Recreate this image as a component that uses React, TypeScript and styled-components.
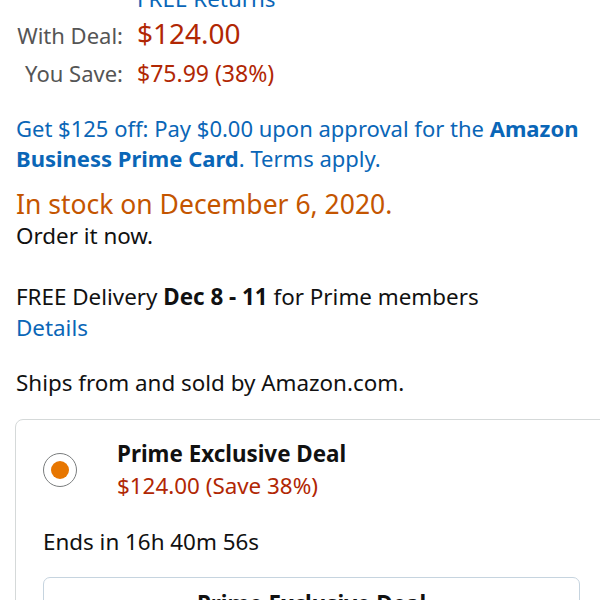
import React from "react";
import styled, { createGlobalStyle } from "styled-components";

const GlobalStyle = createGlobalStyle`
  html, body {
    margin: 0;
    padding: 0;
    background: #fff;
    overflow: hidden;
  }
  body {
    font-family: "Noto Sans", "Open Sans", Arial, sans-serif;
    color: #111;
  }
`;

type Price = { label: string; value: string; big?: boolean };

const prices: Array<Price> = [
  { label: "With Deal:", value: "$124.00", big: true },
  { label: "You Save:", value: "$75.99 (38%)" },
];

export default function App() {
  return (
    <Page>
      <GlobalStyle />
      <PriceGrid>
        <span />
        <Link>FREE Returns</Link>
        {prices.map((p) => (
          <React.Fragment key={p.label}>
            <PriceLabel>{p.label}</PriceLabel>
            <PriceValue big={p.big}>{p.value}</PriceValue>
          </React.Fragment>
        ))}
      </PriceGrid>

      <Promo>
        Get $125 off: Pay $0.00 upon approval for the <b>Amazon Business Prime Card</b>. Terms
        apply.
      </Promo>

      <Stock>In stock on December 6, 2020.</Stock>
      <Line>Order it now.</Line>

      <Delivery>
        <Line>
          FREE Delivery <b>Dec 8 - 11</b> for Prime members
        </Line>
        <Link>Details</Link>
      </Delivery>

      <Line>Ships from and sold by Amazon.com.</Line>

      <Card>
        <OptionRow>
          <Radio>
            <RadioDot />
          </Radio>
          <OptionText>
            <OptionTitle>Prime Exclusive Deal</OptionTitle>
            <OptionPrice>$124.00 (Save 38%)</OptionPrice>
          </OptionText>
        </OptionRow>
        <Line>Ends in 16h 40m 56s</Line>
        <DealButton>Prime Exclusive Deal</DealButton>
      </Card>
    </Page>
  );
}

const Page = styled.div`
  padding: 0 16px;
  font-size: 22.4px;
  line-height: 30px;
`;

const PriceGrid = styled.div`
  display: grid;
  grid-template-columns: 107px auto;
  column-gap: 14px;
  align-items: baseline;
  margin-top: -16px;
`;

const Link = styled.div`
  color: #0a66b7;
`;

const PriceLabel = styled.div`
  text-align: right;
  color: #555;
  font-size: 22px;
  line-height: 38px;
`;

const PriceValue = styled.div<{ big?: boolean }>`
  color: #b12704;
  font-size: ${(p) => (p.big ? 28 : 23)}px;
  line-height: 38px;
`;

const Promo = styled.div`
  color: #0a66b7;
  font-size: 22px;
  margin: 21px -16px 0 0;
  b {
    font-weight: 700;
  }
`;

const Stock = styled.div`
  color: #c45500;
  font-size: 26.5px;
  line-height: 34px;
  margin-top: 14px;
`;

const Line = styled.div`
  color: #111;
  b {
    font-weight: 700;
  }
`;

const Delivery = styled.div`
  display: flex;
  flex-direction: column;
  gap: 1px;
  margin: 31px 0 25px;
`;

const Card = styled.div`
  margin: 21px 0 0 -1px;
  width: 593px;
  box-sizing: border-box;
  border: 1px solid #d5d9d9;
  border-radius: 8px;
  padding: 19px 27px 0;
`;

const OptionRow = styled.div`
  display: flex;
  align-items: center;
  gap: 40px;
  margin-bottom: 26px;
`;

const Radio = styled.div`
  width: 34px;
  height: 34px;
  box-sizing: border-box;
  border: 1.5px solid #7a7d7e;
  border-radius: 50%;
  display: flex;
  align-items: center;
  justify-content: center;
  flex: none;
`;

const RadioDot = styled.div`
  width: 18px;
  height: 18px;
  border-radius: 50%;
  background: #e77600;
`;

const OptionText = styled.div`
  display: flex;
  flex-direction: column;
  gap: 2px;
`;

const OptionTitle = styled.div`
  font-weight: 700;
  color: #111;
`;

const OptionPrice = styled.div`
  color: #b12704;
`;

const DealButton = styled.div`
  margin-top: 20px;
  border: 1px solid #c6d4df;
  border-radius: 7px;
  background: #fff;
  text-align: center;
  font-weight: 700;
  padding: 11px 0 10px;
`;
